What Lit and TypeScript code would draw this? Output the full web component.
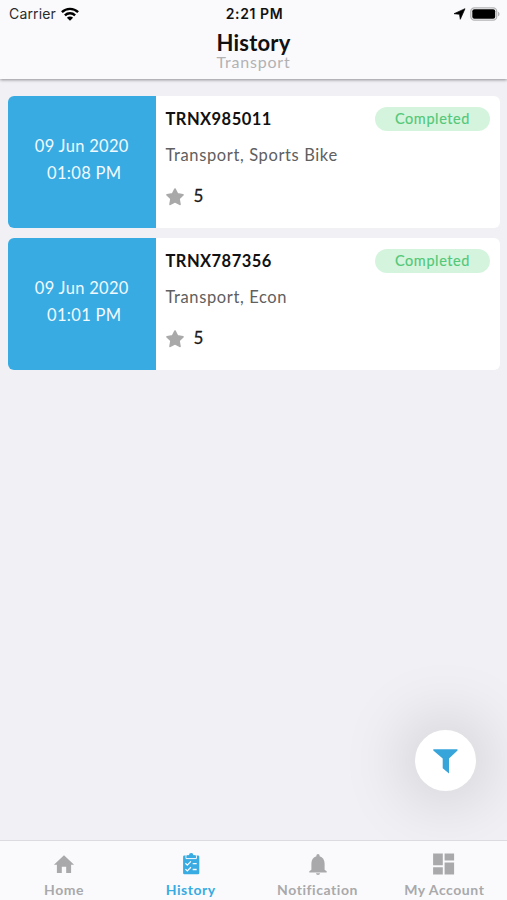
import { LitElement, html, css, svg } from "lit";
import { customElement, property } from "lit/decorators.js";
import { classMap } from "lit/directives/class-map.js";

interface Trip {
  id: string;
  date: string;
  time: string;
  service: string;
  status: string;
  rating: number;
}

const trips: Trip[] = [
  { id: "TRNX985011", date: "09 Jun 2020", time: "01:08 PM", service: "Transport, Sports Bike", status: "Completed", rating: 5 },
  { id: "TRNX787356", date: "09 Jun 2020", time: "01:01 PM", service: "Transport, Econ", status: "Completed", rating: 5 },
];

const icons: Record<string, unknown> = {
  home: svg`<path d="M12 3.200 1.900 12.800h3V21h4.900v-6.200h4.400V21h4.900v-8.200h3z"/>`,
  history: svg`<path d="M5.400 3.500H19a1.300 1.300 0 0 1 1.300 1.300V21a1.300 1.300 0 0 1-1.300 1.300H5.400A1.300 1.300 0 0 1 4.100 21V4.800a1.300 1.300 0 0 1 1.300-1.300z"/>
    <path d="M7 3.400v3.200h10.400V3.400" fill="none" stroke="#fafafc" stroke-width="1"/>
    <path d="M7.700 5.900V4.300c0-.7.500-1.100 1.200-1.100H10a2.200 2.200 0 0 1 4.400 0h1.100c.7 0 1.200.4 1.200 1.100v1.600z"/>
    <path d="m6.400 11.300 1.900 1.800 3.600-3.700M13.700 11.700h4M6.400 17.100l1.900 1.800 3.600-3.700M13.700 17.500h4" fill="none" stroke="#fafafc" stroke-width="1.300"/>`,
  bell: svg`<path d="M12 23a2.100 2.100 0 0 0 2.100-1.800H9.900A2.100 2.100 0 0 0 12 23zm6.600-5.300v-6.200c0-3.700-1.900-6.400-5-7.200v-.8a1.600 1.600 0 0 0-3.200 0v.8c-3.100.8-5 3.500-5 7.200v6.200l-2.100 1.600v1.100h17.400v-1.100z"/>`,
  account: svg`<path d="M1.100 1.500h9.700v11.700H1.100zM12.600 1.500h9.500v7h-9.500zM12.600 10.500h9.500v12h-9.500zM1.100 15.200h9.700v7.300H1.100z"/>`,
};

@customElement("status-bar")
class StatusBar extends LitElement {
  static styles = css`
    :host { display: grid; grid-template-columns: 1fr auto 1fr; align-items: center; height: 27px; padding: 0 7px 0 9px; box-sizing: border-box; font: 14px/20px Inter, "Liberation Sans", sans-serif; color: #111; }
    .left, .right { display: flex; align-items: center; }
    .left { gap: 5px; letter-spacing: 0.15px; color: #2b2b2e; }
    .right { justify-content: flex-end; gap: 4px; }
    .time { font-size: 14px; font-weight: 600; letter-spacing: 0.6px; }
    svg { display: block; }
  `;
  render() {
    return html`
      <div class="left"><span>Carrier</span>
        <svg width="18" height="14" viewBox="0 0 18 14" fill="none" stroke="#000" stroke-width="2.400">
          <path d="M.9 5.100a11.700 11.700 0 0 1 16.200 0M3.900 8.300a7.300 7.300 0 0 1 10.200 0"/>
          <path d="M9 13.700 5.900 10.700a4.400 4.400 0 0 1 6.200 0z" fill="#000" stroke="none"/>
        </svg>
      </div>
      <div class="time">2:21 PM</div>
      <div class="right">
        <svg width="13" height="12" viewBox="0 0 13 12"><path d="M12 .7 7.300 11.300 6.500 6.300 1 5.700z" stroke="#000" stroke-width=".7" stroke-linejoin="round"/></svg>
        <svg width="30" height="14" viewBox="0 0 30 14">
          <rect x=".8" y=".8" width="25.900" height="12.400" rx="3.600" fill="#fafafc" stroke="#b4b4b6" stroke-width="1.300"/>
          <rect x="2.300" y="2.300" width="22.900" height="9.400" rx="2"/>
          <path d="M28 4.700c2 .7 2 3.900 0 4.600z" fill="#b4b4b6"/>
        </svg>
      </div>`;
  }
}

@customElement("trip-card")
class TripCard extends LitElement {
  @property({ attribute: false }) trip!: Trip;
  static styles = css`
    :host { display: flex; height: 132px; border-radius: 6px; overflow: hidden; background: #fff; }
    .when { width: 147.500px; flex: none; box-sizing: border-box; padding-top: 37px; background: #38abe2; color: #f1faff; font-size: 16.500px; line-height: 27px; text-align: center; letter-spacing: 0.3px; }
    .time { padding-left: 5px; }
    .body { flex: 1; padding: 11px 10px 0 10px; }
    .top { display: flex; justify-content: space-between; align-items: flex-start; }
    .id { font-size: 16.500px; font-weight: 700; line-height: 24px; letter-spacing: 0.45px; color: #111; }
    .status { width: 115px; height: 24px; border-radius: 12px; background: #d5f4de; color: #52c878; font-size: 14.500px; line-height: 23px; text-align: center; letter-spacing: 0.6px; -webkit-text-stroke: 0.15px #52c878; }
    .service { margin-top: 12px; font-size: 16.500px; line-height: 24px; letter-spacing: 0.62px; color: #606060; }
    .rating { display: flex; align-items: center; gap: 10px; margin-top: 17px; font-size: 17px; line-height: 24px; color: #1a1a1a; -webkit-text-stroke: 0.3px #1a1a1a; }
    svg { display: block; margin-top: 1px; }
  `;
  render() {
    const t = this.trip;
    return html`
      <div class="when"><div>${t.date}</div><div class="time">${t.time}</div></div>
      <div class="body">
        <div class="top"><span class="id">${t.id}</span><span class="status">${t.status}</span></div>
        <div class="service">${t.service}</div>
        <div class="rating">
          <svg width="18" height="18" viewBox="0 0 18 18"><path d="m9 1.100 2.400 4.900 5.500.8-4 3.900 1 5.600L9 13.700l-4.900 2.600 1-5.600-4-3.900 5.500-.8z" fill="#a9a9a9" stroke="#a9a9a9" stroke-width="1.800" stroke-linejoin="round"/></svg>
          <span>${t.rating}</span>
        </div>
      </div>`;
  }
}

@customElement("tab-item")
class TabItem extends LitElement {
  @property() icon = "";
  @property() label = "";
  @property({ type: Boolean }) active = false;
  static styles = css`
    :host { display: block; }
    .tab { display: flex; flex-direction: column; align-items: center; padding: 11px 0 0 1.300px; color: #a9a9ab; font-size: 14px; font-weight: 700; line-height: 20px; letter-spacing: 0.55px; white-space: nowrap; }
    .tab.active { color: #38abe2; }
    svg { display: block; width: 24px; height: 24px; margin-bottom: 4px; fill: currentColor; }
  `;
  render() {
    return html`<div class=${classMap({ tab: true, active: this.active })}>
      <svg viewBox="0 0 24 24">${icons[this.icon]}</svg><span>${this.label}</span>
    </div>`;
  }
}

@customElement("app-root")
class AppRoot extends LitElement {
  static styles = css`
    :host { display: flex; flex-direction: column; position: relative; height: 900px; overflow: hidden; background: #f0f0f5; font-family: Lato, "Open Sans", sans-serif; }
    header { height: 79px; flex: none; background: #fafafc; box-shadow: 0 1px 3px rgba(0, 0, 0, 0.4); text-align: center; }
    h1 { margin: 5px 0 0; font-size: 22px; line-height: 22px; font-weight: 700; letter-spacing: 0.2px; color: #111; }
    .sub { font-size: 16px; line-height: 16px; letter-spacing: 0.8px; color: #b2b2b4; }
    main { flex: 1; display: flex; flex-direction: column; gap: 10px; padding: 17px 7px 0 8px; }
    nav { height: 60px; flex: none; box-sizing: border-box; border-top: 1px solid #dcdce0; background: #fafafc; display: grid; grid-template-columns: repeat(4, 1fr); position: relative; }
    .filter { position: absolute; right: 31px; bottom: 109px; width: 61px; height: 61px; padding: 0; border: 0; border-radius: 50%; background: #fff; box-shadow: 0 0 64px 14px rgba(0, 0, 0, 0.13); display: grid; place-items: center; }
  `;
  render() {
    return html`
      <header><status-bar></status-bar><h1>History</h1><div class="sub">Transport</div></header>
      <main>${trips.map((t) => html`<trip-card .trip=${t}></trip-card>`)}</main>
      <button class="filter" aria-label="Filter">
        <svg width="26" height="26" viewBox="0 0 26 26"><path d="M.3 1.200h24.200v1.300L16 10.500v15L9.700 20.300v-9.800L.3 2.500z" fill="#38a5da"/></svg>
      </button>
      <nav>
        <tab-item icon="home" label="Home"></tab-item>
        <tab-item icon="history" label="History" active></tab-item>
        <tab-item icon="bell" label="Notification"></tab-item>
        <tab-item icon="account" label="My Account"></tab-item>
      </nav>`;
  }
}
